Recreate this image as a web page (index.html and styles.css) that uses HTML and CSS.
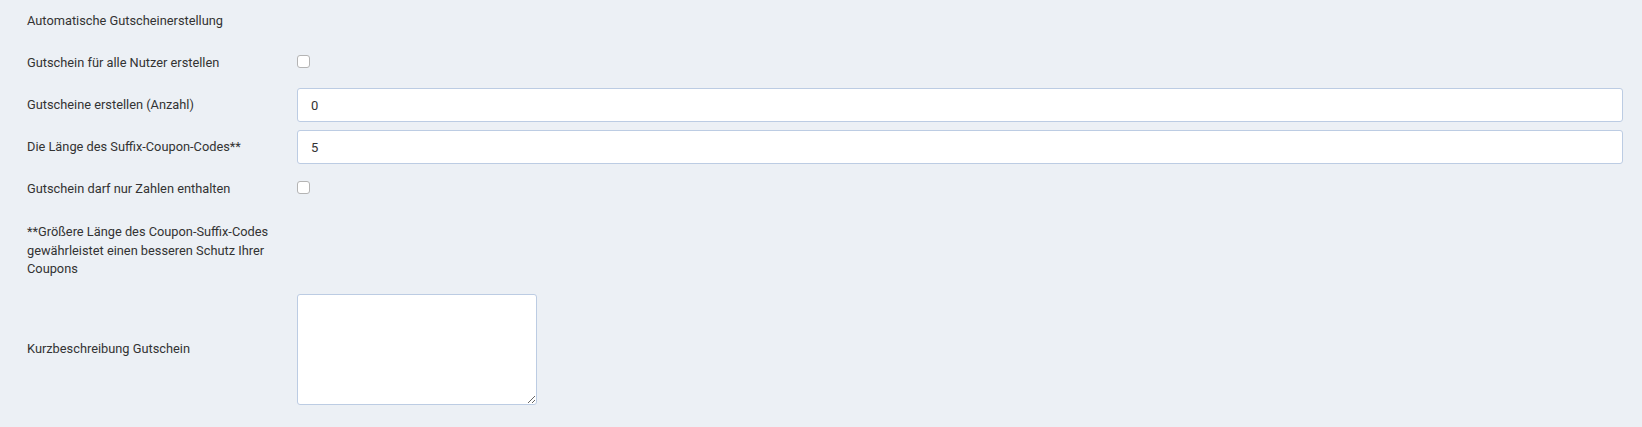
FILE: index.html
```html
<!DOCTYPE html>
<html lang="de">
<head>
<meta charset="utf-8">
<title>Automatische Gutscheinerstellung</title>
<link rel="stylesheet" href="styles.css">
</head>
<body>
<form class="form">
  <div class="row">
    <div class="label">Automatische Gutscheinerstellung</div>
    <div class="field"></div>
  </div>
  <div class="row">
    <label class="label" for="all">Gutschein für alle Nutzer erstellen</label>
    <div class="field"><input type="checkbox" id="all" class="check"></div>
  </div>
  <div class="row">
    <label class="label" for="count">Gutscheine erstellen (Anzahl)</label>
    <div class="field"><input type="text" id="count" class="input" value="0"></div>
  </div>
  <div class="row">
    <label class="label" for="len">Die Länge des Suffix-Coupon-Codes**</label>
    <div class="field"><input type="text" id="len" class="input" value="5"></div>
  </div>
  <div class="row">
    <label class="label" for="num">Gutschein darf nur Zahlen enthalten</label>
    <div class="field"><input type="checkbox" id="num" class="check"></div>
  </div>
  <div class="row row-note">
    <div class="label">**Größere Länge des Coupon-Suffix-Codes gewährleistet einen besseren Schutz Ihrer Coupons</div>
    <div class="field"></div>
  </div>
  <div class="row">
    <label class="label" for="desc">Kurzbeschreibung Gutschein</label>
    <div class="field"><textarea id="desc" class="textarea"></textarea></div>
  </div>
</form>
</body>
</html>
```
FILE: styles.css
```css
html, body {
  margin: 0;
  padding: 0;
  background: #ecf0f5;
}
body {
  font-family: Roboto, "Liberation Sans", Arial, sans-serif;
  font-size: 12.8px;
  line-height: 18.57px;
  color: #333;
  height: 427px;
  overflow: hidden;
}
.form {
  display: flex;
  flex-direction: column;
  gap: 8px;
  padding: 4px 19px 22px 27px;
}
.row {
  display: grid;
  grid-template-columns: 255px 1fr;
  column-gap: 15px;
  align-items: center;
  min-height: 34px;
}
.row-note {
  padding: 8px 0 7px;
}
.label {
  display: block;
  padding-top: 1px;
}
.field {
  display: flex;
  align-items: flex-start;
}
.check {
  appearance: none;
  -webkit-appearance: none;
  width: 13px;
  height: 13px;
  margin: -3px 0 0 0;
  border: 1px solid #b4b4b4;
  border-radius: 3px;
  background: #fff;
  box-sizing: border-box;
}
.input {
  width: 100%;
  height: 34px;
  box-sizing: border-box;
  border: 1px solid #bccce3;
  border-radius: 3px;
  background: #fff;
  padding: 0 13px;
  font-family: inherit;
  font-size: 13px;
  color: #333;
  outline: none;
}
.textarea {
  width: 240px;
  height: 111px;
  box-sizing: border-box;
  border: 1px solid #bccce3;
  border-radius: 3px;
  background: #fff;
  padding: 6px 12px;
  font-family: inherit;
  font-size: 13px;
  margin: 0;
  display: block;
}
```
